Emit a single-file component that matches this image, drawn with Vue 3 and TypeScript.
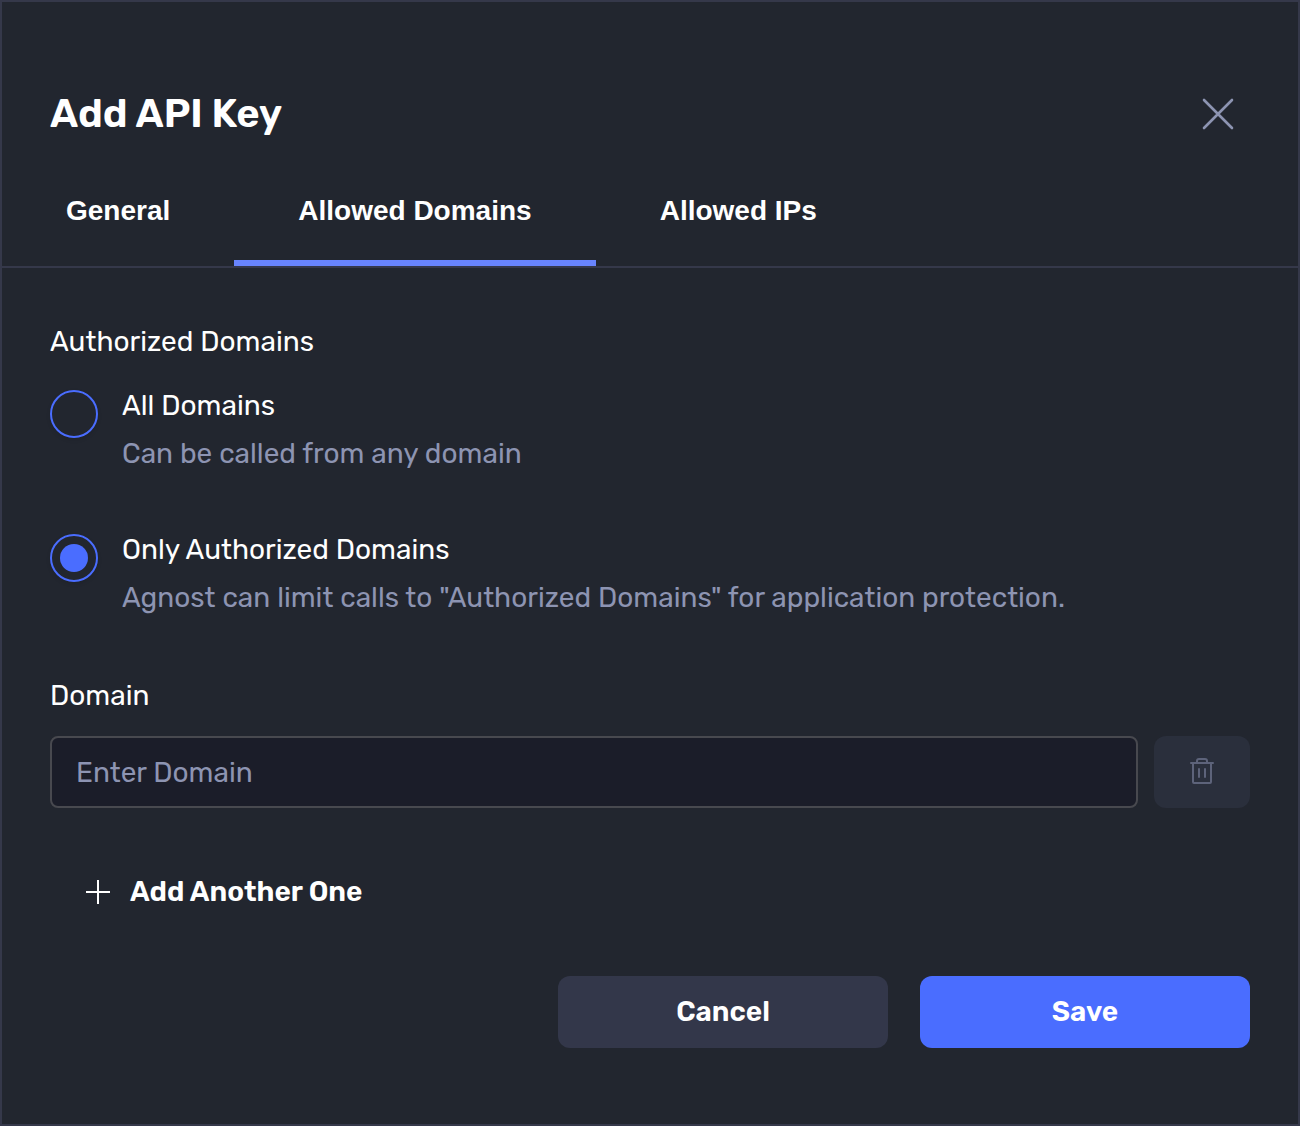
<script setup lang="ts">
import { ref } from 'vue'

const tabs = ['General', 'Allowed Domains', 'Allowed IPs']
const activeTab = ref('Allowed Domains')

const options = [
  {
    value: 'all',
    title: 'All Domains',
    description: 'Can be called from any domain',
  },
  {
    value: 'authorized',
    title: 'Only Authorized Domains',
    description: 'Agnost can limit calls to "Authorized Domains" for application protection.',
  },
]
const selected = ref('authorized')
const domains = ref<string[]>([''])

function addDomain() {
  domains.value.push('')
}

function removeDomain(index: number) {
  domains.value.splice(index, 1)
}
</script>

<template>
  <main class="dialog" role="dialog" aria-labelledby="dialog-title">
    <header class="header">
      <h1 id="dialog-title" class="title">Add API Key</h1>
      <button class="close" type="button" aria-label="Close">
        <svg width="32" height="32" viewBox="0 0 32 32" fill="none" stroke="currentColor" stroke-width="2.6" stroke-linecap="round">
          <path d="M2 2L30 30M30 2L2 30" />
        </svg>
      </button>
    </header>

    <nav class="tabs" role="tablist">
      <button
        v-for="tab in tabs"
        :key="tab"
        type="button"
        role="tab"
        class="tab"
        :class="{ active: tab === activeTab }"
        :aria-selected="tab === activeTab"
        @click="activeTab = tab"
      >
        {{ tab }}
      </button>
    </nav>

    <form class="body" @submit.prevent>
      <fieldset class="group">
        <legend class="label">Authorized Domains</legend>
        <div class="options">
          <label v-for="option in options" :key="option.value" class="option">
            <input v-model="selected" class="radio" type="radio" name="authorization" :value="option.value" />
            <span class="option-text">
              <span>{{ option.title }}</span>
              <span class="muted">{{ option.description }}</span>
            </span>
          </label>
        </div>
      </fieldset>

      <div class="domains">
        <label class="label" for="domain-0">Domain</label>
        <div v-for="(_, index) in domains" :key="index" class="domain-row">
          <input
            :id="`domain-${index}`"
            v-model="domains[index]"
            class="input"
            type="text"
            placeholder="Enter Domain"
          />
          <button
            class="remove"
            type="button"
            aria-label="Remove domain"
            :disabled="domains.length === 1"
            @click="removeDomain(index)"
          >
            <svg width="24" height="28" viewBox="0 0 24 28" fill="none" stroke="currentColor" stroke-width="2" stroke-linecap="round" stroke-linejoin="round">
              <path d="M1 5H23" />
              <path d="M3 5V24Q3 25 4 25H20Q21 25 21 24V5" />
              <path d="M7 5V3Q7 1 9 1H15Q17 1 17 3V5" />
              <path d="M9 11V19M15 11V19" />
            </svg>
          </button>
        </div>
      </div>

      <button class="add" type="button" @click="addDomain">
        <svg width="24" height="24" viewBox="0 0 24 24" fill="none" stroke="currentColor" stroke-width="2">
          <path d="M12 0V24M0 12H24" />
        </svg>
        Add Another One
      </button>

      <footer class="actions">
        <button class="action secondary" type="button">Cancel</button>
        <button class="action primary" type="submit">Save</button>
      </footer>
    </form>
  </main>
</template>

<style>
body {
  background: #22262f;
}
</style>

<style scoped>
.dialog {
  box-sizing: border-box;
  min-height: 100vh;
  padding: 80px 0 76px;
  border: 2px solid #35384a;
  background: #22262f;
  color: #fff;
  font-family: Rubik, Roboto, "Liberation Sans", sans-serif;
  font-size: 28px;
  line-height: 48px;
}

button,
input {
  font: inherit;
  color: inherit;
}

button {
  margin: 0;
  padding: 0;
  border: 0;
  background: none;
  cursor: pointer;
}

.header {
  display: flex;
  align-items: center;
  justify-content: space-between;
  height: 64px;
  padding: 0 64px 0 48px;
}

.title {
  margin: 0;
  font-size: 40px;
  font-weight: 600;
}

.close {
  display: flex;
  color: #8d94b2;
}

.tabs {
  display: flex;
  height: 120px;
  border-bottom: 2px solid #35384a;
}

.tab {
  padding: 16px 64px 0;
  border-bottom: 6px solid transparent;
  font-family: "Liberation Sans", Arial, sans-serif;
  font-weight: 700;
}

.tab.active {
  border-bottom-color: #6884fd;
}

.body {
  display: flex;
  flex-direction: column;
  padding: 50px 48px 0;
}

.group {
  margin: 0;
  padding: 0;
  border: 0;
}

.label {
  display: block;
  padding: 0;
}

.options {
  display: flex;
  flex-direction: column;
  gap: 48px;
  padding-top: 16px;
}

.option {
  display: flex;
  gap: 24px;
}

.radio {
  flex: none;
  appearance: none;
  box-sizing: border-box;
  width: 48px;
  height: 48px;
  margin: 8px 0 0;
  padding: 8px;
  border: 2px solid #4a6dff;
  border-radius: 50%;
  box-shadow: 0 2px 4px rgb(0 0 0 / 10%);
}

.radio:checked {
  background: #4a6dff content-box;
}

.option-text {
  display: flex;
  flex-direction: column;
}

.muted {
  color: #8d94b2;
}

.domains {
  display: flex;
  flex-direction: column;
  gap: 16px;
  padding-top: 50px;
}

.domain-row {
  display: flex;
  gap: 16px;
}

.input {
  flex: 1;
  min-width: 0;
  box-sizing: border-box;
  height: 72px;
  padding: 0 24px;
  border: 2px solid #48494f;
  border-radius: 8px;
  background: #1b1d29;
}

.input::placeholder {
  color: #8d94b2;
  opacity: 1;
}

.remove {
  display: flex;
  align-items: center;
  justify-content: center;
  width: 96px;
  height: 72px;
  border-radius: 12px;
  background: #2a2f3c;
  color: #5d637a;
}

.add {
  display: flex;
  align-items: center;
  align-self: flex-start;
  gap: 20px;
  margin-top: 48px;
  padding: 12px 36px;
  font-weight: 600;
}

.actions {
  display: flex;
  justify-content: flex-end;
  gap: 32px;
  padding-top: 48px;
}

.action {
  width: 330px;
  height: 72px;
  border-radius: 12px;
  font-weight: 600;
}

.secondary {
  background: #33374a;
}

.primary {
  background: #4a6dff;
}
</style>
